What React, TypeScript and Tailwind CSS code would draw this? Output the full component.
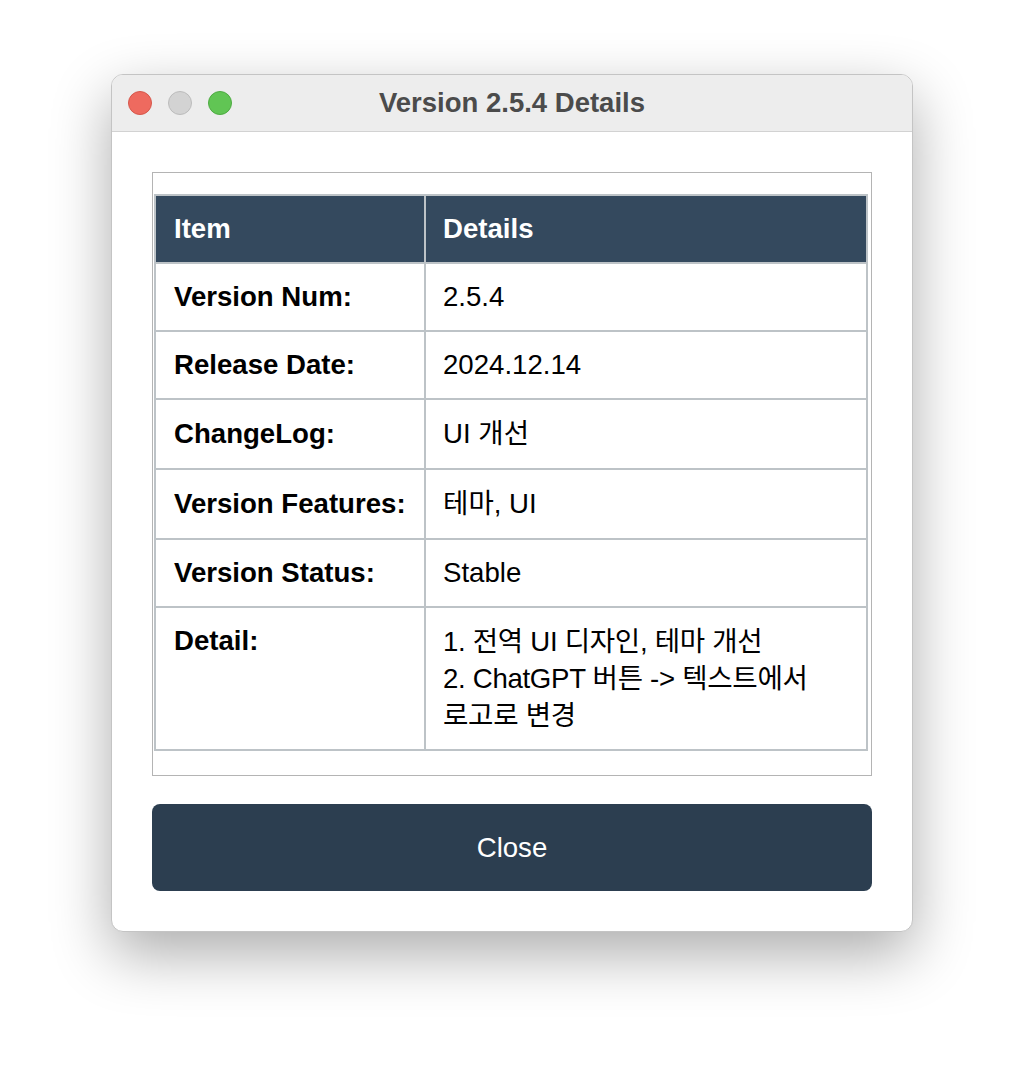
const rows: { label: string; value: string[]; cjk?: boolean }[] = [
  { label: "Version Num:", value: ["2.5.4"] },
  { label: "Release Date:", value: ["2024.12.14"] },
  { label: "ChangeLog:", value: ["UI 개선"], cjk: true },
  { label: "Version Features:", value: ["테마, UI"], cjk: true },
  { label: "Version Status:", value: ["Stable"] },
  {
    label: "Detail:",
    value: ["1. 전역 UI 디자인, 테마 개선", "2. ChatGPT 버튼 -> 텍스트에서", "로고로 변경"],
  },
];

const font = {
  fontFamily: '"Liberation Sans", Arial, "Noto Sans CJK KR", sans-serif',
};

export default function App() {
  return (
    <div className="min-h-[1080px] w-[1024px] bg-white pl-[111px] pt-[74px]" style={font}>
      <div className="w-[802px] overflow-hidden rounded-[12px] border border-[#c4c4c4] bg-white shadow-[0_22px_60px_rgba(0,0,0,0.33)]">
        {/* Title bar */}
        <div className="grid h-[57px] grid-cols-[1fr_auto_1fr] items-center border-b border-[#d2d2d2] bg-[#ededed]">
          <div className="flex items-center gap-[16px] pl-[16px]">
            <span className="h-[24px] w-[24px] rounded-full border border-[#d6574b] bg-[#ee6a5f]" />
            <span className="h-[24px] w-[24px] rounded-full border border-[#bcbcbc] bg-[#d3d3d3]" />
            <span className="h-[24px] w-[24px] rounded-full border border-[#4eab42] bg-[#61c554]" />
          </div>
          <div className="text-[27.5px] font-bold text-[#4b4b4b]">Version 2.5.4 Details</div>
          <div />
        </div>

        {/* Body */}
        <div className="px-[40px] pb-[40px] pt-[40px]">
          <div className="border border-[#b4b4b4] pb-[24px] pl-[1px] pt-[21px]">
            <table className="w-[714px] border-collapse border-2 border-[#bdc3c7] text-[27.6px]">
              <thead>
                <tr className="bg-[#34495e] text-white">
                  <th className="w-[270px] whitespace-nowrap border-2 border-[#bdc3c7] px-[18px] py-[15px] text-left font-bold leading-[36px]">
                    Item
                  </th>
                  <th className="border-2 border-[#bdc3c7] px-[17px] py-[15px] text-left font-bold leading-[36px]">
                    Details
                  </th>
                </tr>
              </thead>
              <tbody>
                {rows.map((r) => (
                  <tr key={r.label} className="text-black">
                    <td
                      className={
                        r.cjk
                          ? "whitespace-nowrap border-2 border-[#bdc3c7] px-[18px] py-[15px] align-middle font-bold leading-[38px]"
                          : "whitespace-nowrap border-2 border-[#bdc3c7] px-[18px] py-[15px] align-top font-bold leading-[36px]"
                      }
                    >
                      {r.label}
                    </td>
                    <td
                      className={
                        r.value.length > 1
                          ? "border-2 border-[#bdc3c7] px-[17px] py-[15px] align-top leading-[37px] tracking-[-0.3px]"
                          : r.cjk
                            ? "border-2 border-[#bdc3c7] px-[17px] py-[15px] align-middle leading-[38px]"
                            : "border-2 border-[#bdc3c7] px-[17px] py-[15px] align-top leading-[36px]"
                      }
                    >
                      {r.value.map((v) => (
                        <div key={v}>{v}</div>
                      ))}
                    </td>
                  </tr>
                ))}
              </tbody>
            </table>
          </div>

          <button
            type="button"
            className="mt-[28px] flex h-[87px] w-[720px] items-center justify-center rounded-[8px] bg-[#2c3e50] text-[27.6px] text-white"
          >
            Close
          </button>
        </div>
      </div>
    </div>
  );
}
